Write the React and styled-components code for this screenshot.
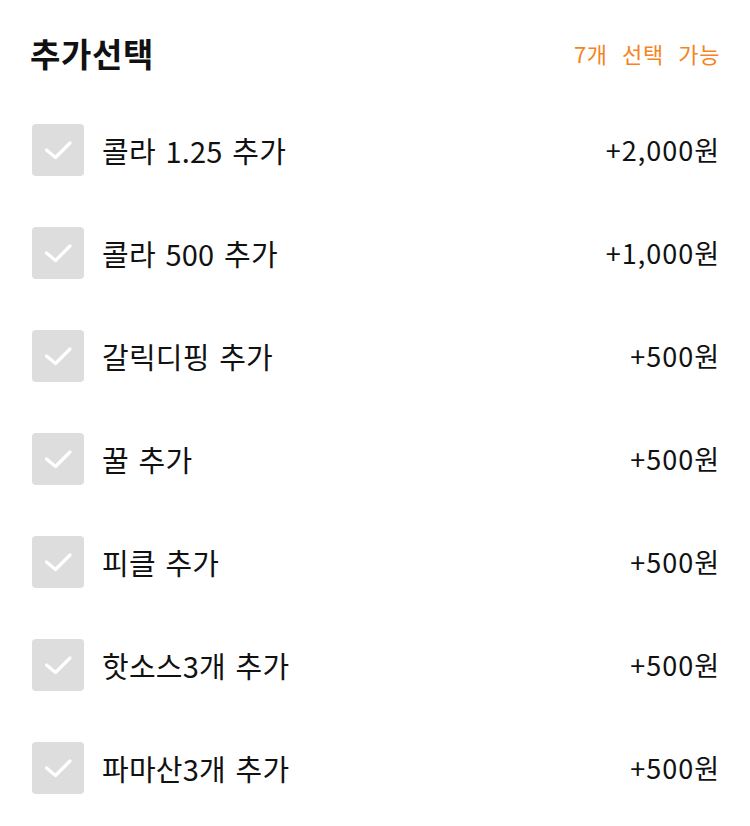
import React from "react";
import styled, { createGlobalStyle } from "styled-components";

const Global = createGlobalStyle`
  html, body { margin: 0; padding: 0; background: #fff; }
  body { font-family: "Noto Sans CJK KR", "Noto Sans", sans-serif; color: #111; }
`;

const Wrap = styled.div`
  width: 750px;
  box-sizing: border-box;
  padding: 0 32px 0 32px;
`;

const Header = styled.div`
  height: 98px;
  display: flex;
  justify-content: space-between;
  align-items: flex-start;
  padding-top: 33px;
  box-sizing: border-box;
`;

const Title = styled.h2`
  margin: 0 0 0 -2px;
  font-size: 33px;
  line-height: 40px;
  font-weight: 700;
  color: #111;
  letter-spacing: 0.6px;
`;

const Limit = styled.span`
  font-size: 22px;
  line-height: 40px;
  color: #f5841f;
  word-spacing: 9px;
  letter-spacing: 0.6px;
  margin-right: -2px;
`;

const List = styled.ul`
  list-style: none;
  margin: 0;
  padding: 0;
`;

const Row = styled.li`
  height: 103px;
  display: flex;
  align-items: center;
`;

const Box = styled.span`
  width: 52px;
  height: 52px;
  border-radius: 4px;
  background: #dddddd;
  display: flex;
  align-items: center;
  justify-content: center;
  flex-shrink: 0;
`;

const Label = styled.span`
  margin-left: 18px;
  font-size: 29px;
  color: #111;
  flex: 1;
  word-spacing: 3px;
  letter-spacing: 0.2px;
`;

const Price = styled.span`
  font-size: 27px;
  color: #111;
  letter-spacing: 1px;
  margin-right: -2px;
`;

const Check = () => (
  <svg width="52" height="52" viewBox="0 0 52 52">
    <path d="M14.5 26 L23.5 33.5 L38 19" fill="none" stroke="#fff" strokeWidth="3.2" strokeLinecap="round" strokeLinejoin="round" />
  </svg>
);

const items = [
  ["콜라 1.25 추가", "+2,000원"],
  ["콜라 500 추가", "+1,000원"],
  ["갈릭디핑 추가", "+500원"],
  ["꿀 추가", "+500원"],
  ["피클 추가", "+500원"],
  ["핫소스3개 추가", "+500원"],
  ["파마산3개 추가", "+500원"],
];

export default function App() {
  return (
    <Wrap>
      <Global />
      <Header>
        <Title>추가선택</Title>
        <Limit>7개 선택 가능</Limit>
      </Header>
      <List>
        {items.map(([name, price]) => (
          <Row key={name}>
            <Box><Check /></Box>
            <Label>{name}</Label>
            <Price>{price}</Price>
          </Row>
        ))}
      </List>
    </Wrap>
  );
}
